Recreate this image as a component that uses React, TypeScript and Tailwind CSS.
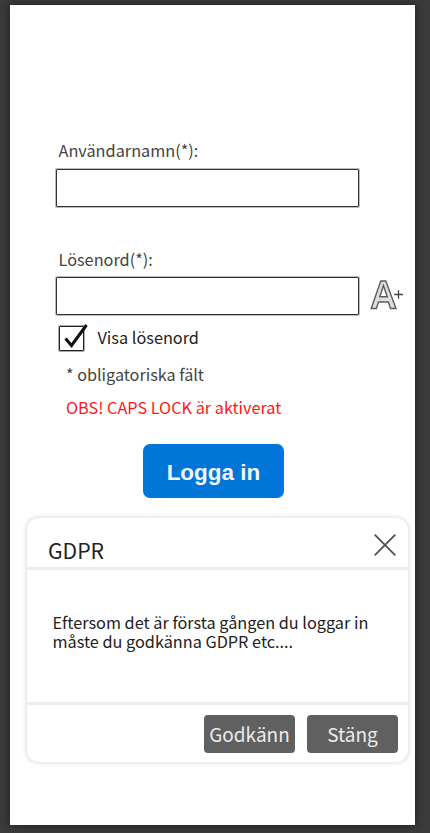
function TextSizeIcon() {
  return (
    <svg width="36" height="36" viewBox="0 0 36 36" fill="none" aria-hidden="true">
      <path
        d="M2.200 32.500L11.800 5h5L27 32.500H21.500L19.400 26H9.500L7.400 32.500zM10.800 20.800h7.500L14.400 9.500z"
        stroke="#5c5c5c"
        strokeWidth="1.400"
        fill="#dedede"
      />
      <path d="M25.200 18.500h8.800M29.500 14.200v8.600" stroke="#444" strokeWidth="1.300" />
    </svg>
  );
}

function CheckMark() {
  return (
    <svg className="absolute -top-[4px] -left-px" width="32" height="32" viewBox="0 0 32 32" fill="none" aria-hidden="true">
      <path d="M6.500 15.500l6 7L27.500 2" stroke="#111" strokeWidth="3" />
    </svg>
  );
}

export default function App() {
  return (
    <div className="h-[833px] w-[430px] overflow-hidden bg-[#3b3b3b] pt-[5px] pl-[10px] font-['Noto_Sans_CJK_SC',sans-serif] whitespace-nowrap">
      <main className="flex h-[820px] w-[405px] flex-col bg-white pt-[133px] shadow-[0_0_9px_#1c1c1c]">
        <label className="ml-[48.5px] h-[31px] text-[16.3px] leading-[24px] text-[#444]">Användarnamn(*):</label>
        <input className="ml-[46px] h-[38px] w-[303px] shrink-0 rounded-[1px] border border-[#333] shadow-[0_0_0_1px_#bbb] outline-none" />
        <label className="mt-[40px] ml-[48.5px] h-[30px] text-[16.3px] leading-[24px] text-[#444]">Lösenord(*):</label>
        <div className="flex h-[38px] shrink-0">
          <input className="ml-[46px] h-[38px] w-[303px] rounded-[1px] border border-[#333] shadow-[0_0_0_1px_#bbb] outline-none" />
          <div className="-mt-px ml-[10px]">
            <TextSizeIcon />
          </div>
        </div>
        <div className="mt-[11px] ml-[49px] flex h-[25px] items-center">
          <div className="relative h-[25px] w-[25px] rounded-[1px] border border-[#222] shadow-[0_0_0_1px_#aaa]">
            <CheckMark />
          </div>
          <span className="-mt-[3px] ml-[13.5px] text-[16.3px] leading-[24px] text-[#222]">Visa lösenord</span>
        </div>
        <p className="mt-[11px] ml-[56px] text-[16.2px] leading-[24px] text-[#444]">* obligatoriska fält</p>
        <p className="mt-[9px] ml-[56px] text-[16.25px] leading-[24px] text-[#ff1717]">OBS! CAPS LOCK är aktiverat</p>
        <button className="mt-[25px] ml-[133px] h-[54px] w-[141px] shrink-0 rounded-[7px] bg-[#0275d8] pt-[4px] font-['Liberation_Sans',sans-serif] text-[22.5px] font-bold text-[#f1f7fd]">
          Logga in
        </button>
        <section className="mt-[20px] ml-[17px] flex h-[244px] w-[381px] shrink-0 flex-col rounded-[12px] bg-white shadow-[0_0_0_1px_#ebebeb,0_0_4px_1px_#dcdcdc]">
          <header className="flex h-[52px] justify-between border-b-[3px] border-[#eee] pt-[16px] pr-[12px] pl-[21px]">
            <h2 className="text-[21.2px] leading-[32px] text-[#222]">GDPR</h2>
            <svg width="22" height="22" viewBox="0 0 22 22" fill="none" aria-hidden="true">
              <path d="M.7.7l20.600 20.600M21.300.7L.7 21.300" stroke="#505050" strokeWidth="1.800" />
            </svg>
          </header>
          <p className="h-[132px] pt-[43px] pl-[25.5px] text-[16.250px] leading-[18.5px] text-[#222]">
            Eftersom det är första gången du loggar in
            <br />
            måste du godkänna GDPR etc....
          </p>
          <footer className="flex h-[60px] justify-end gap-[12px] border-t-[3px] border-[#eee] pt-[10px] pr-[10px]">
            <button className="h-[38px] w-[91px] rounded-[4px] bg-[#606060] text-[19px] leading-[38px] text-[#ececec]">Godkänn</button>
            <button className="h-[38px] w-[91px] rounded-[4px] bg-[#606060] text-[19px] leading-[38px] text-[#ececec]">Stäng</button>
          </footer>
        </section>
      </main>
    </div>
  );
}
